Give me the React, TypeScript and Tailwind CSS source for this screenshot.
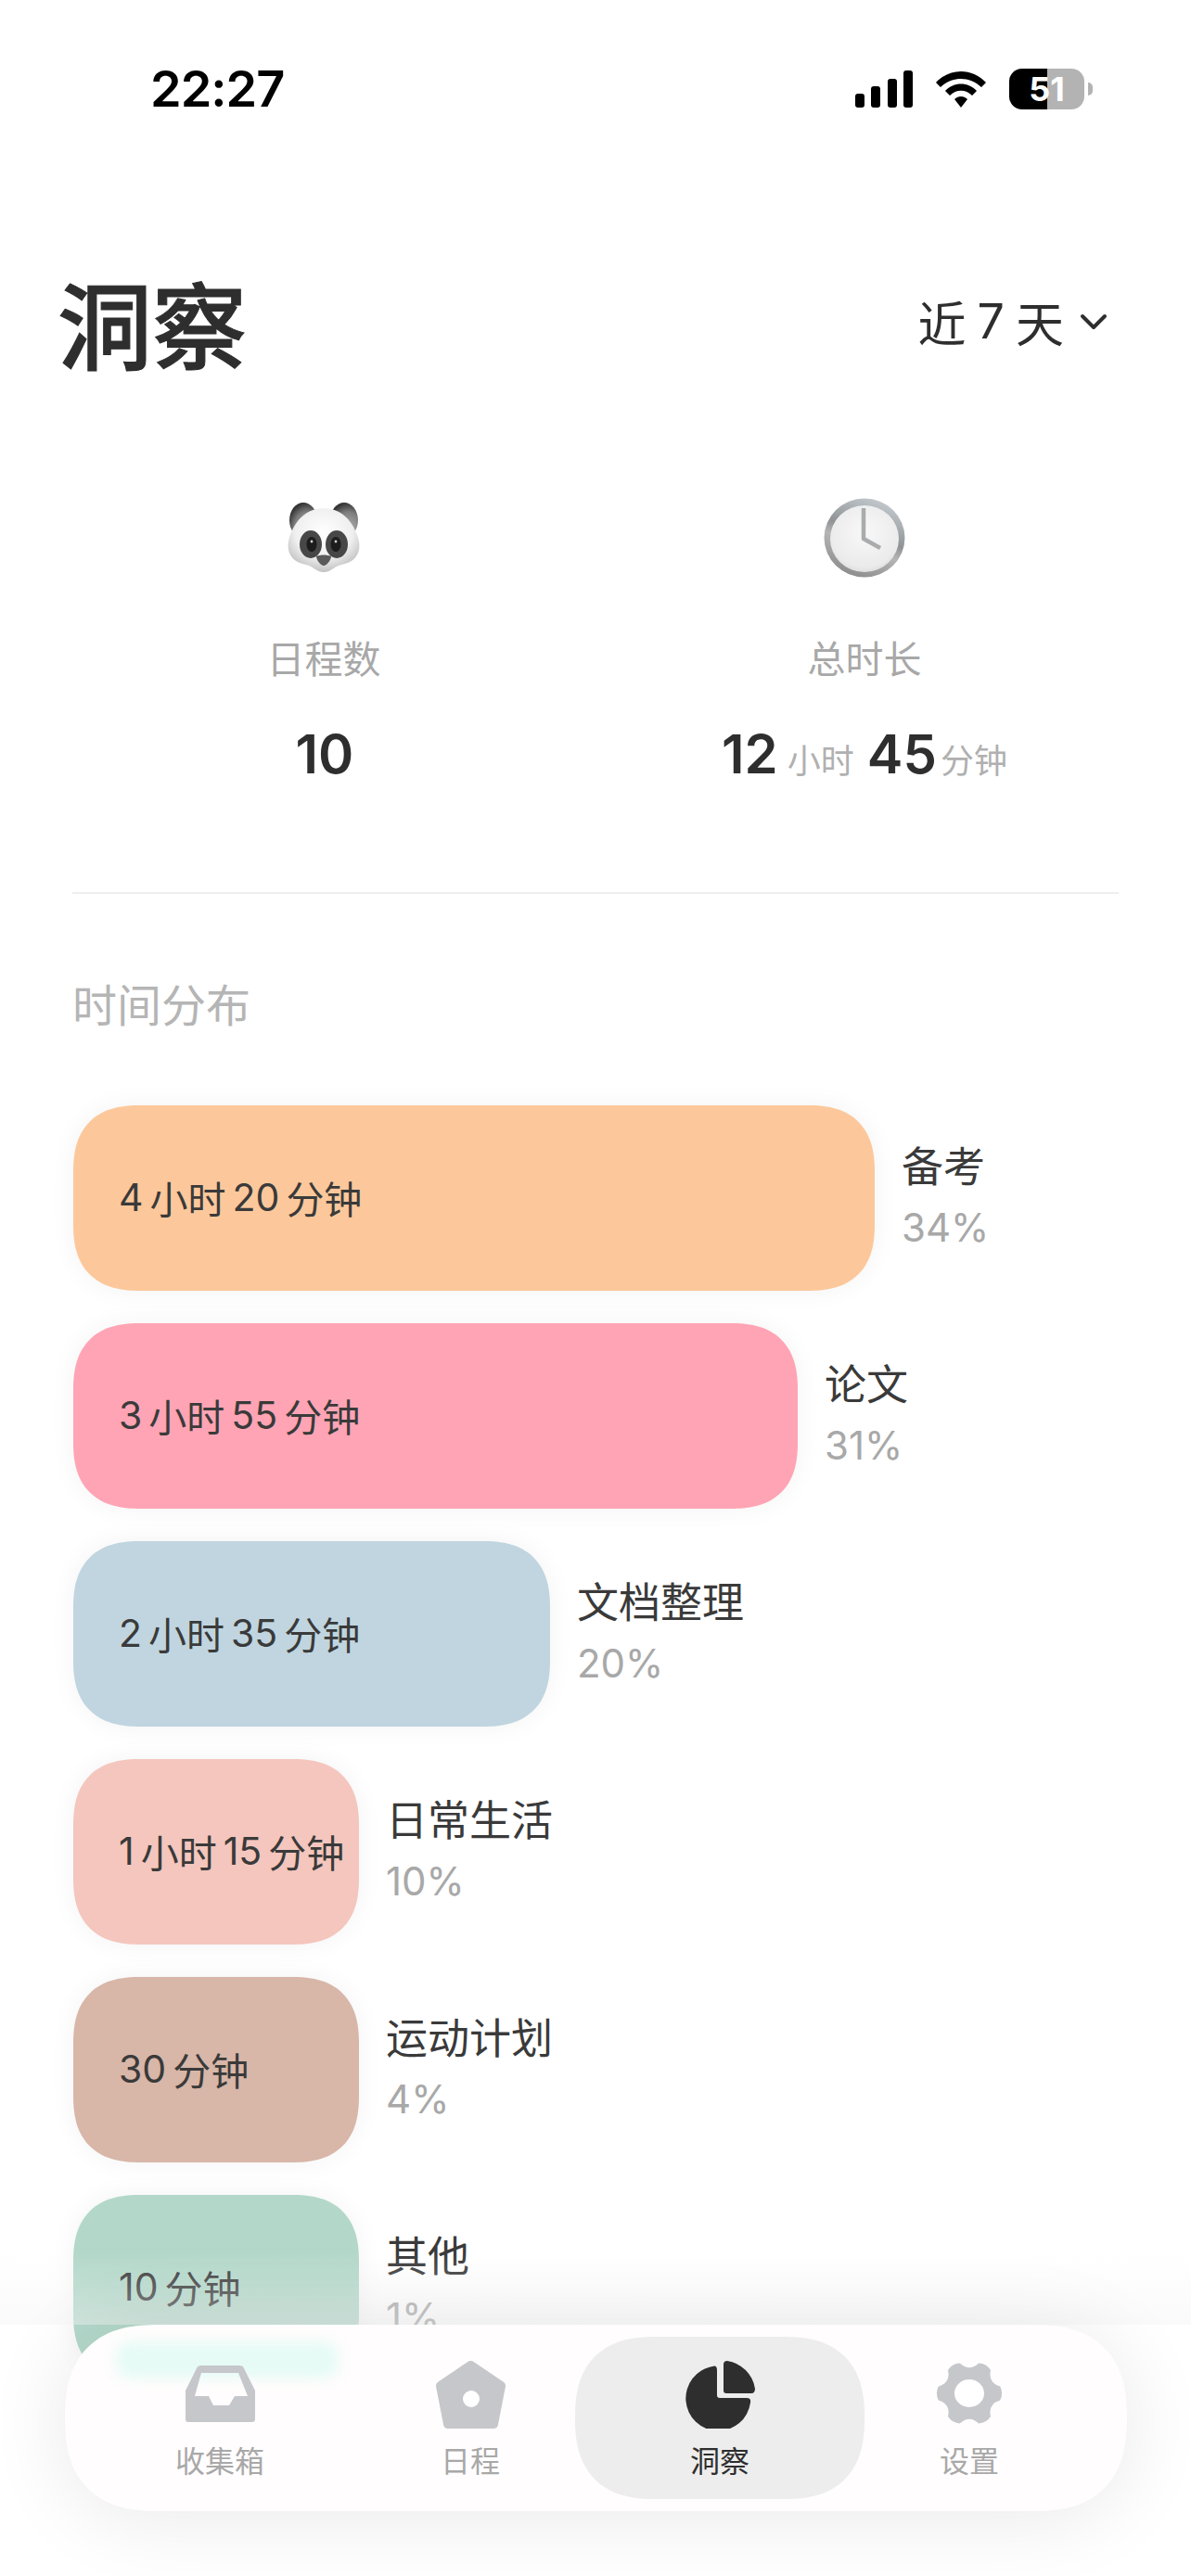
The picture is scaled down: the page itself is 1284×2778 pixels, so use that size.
import React from "react"

const bars = [
  { time: ["4", "小时", "20", "分钟"], name: "备考", pct: "34%", width: "w-[864px]", color: "bg-[#fcc89b]" },
  { time: ["3", "小时", "55", "分钟"], name: "论文", pct: "31%", width: "w-[781px]", color: "bg-[#ffa4b4]" },
  { time: ["2", "小时", "35", "分钟"], name: "文档整理", pct: "20%", width: "w-[514px]", color: "bg-[#c0d5df]" },
  { time: ["1", "小时", "15", "分钟"], name: "日常生活", pct: "10%", width: "w-[308px]", color: "bg-[#f4c6bd]" },
  { time: ["30", "分钟"], name: "运动计划", pct: "4%", width: "w-[308px]", color: "bg-[#d8b6a8]" },
  { time: ["10", "分钟"], name: "其他", pct: "1%", width: "w-[308px]", color: "bg-[#b3d8ca]" },
]

const gearPath = () => {
  const cx = 37
  const cy = 35
  let d = ""
  for (let i = 0; i < 6; i++) {
    const a = (i * Math.PI) / 3
    const p = (ang: number, r: number) =>
      `${(cx + r * Math.cos(ang)).toFixed(1)} ${(cy + r * Math.sin(ang)).toFixed(1)}`
    d += `${i === 0 ? "M" : "L"}${p(a - 0.22, 34)} Q${p(a, 37)} ${p(a + 0.22, 34)} Q${p(a + Math.PI / 6, 23)} ${p(a + Math.PI / 3 - 0.22, 34)} `
  }
  return d + "Z"
}

const StatusBar = () => (
  <div className="flex items-center justify-between pl-[162px] pr-[106px] pt-[66px]">
    <span className="font-['Inter',sans-serif] text-[54px] font-semibold leading-[60px] text-black tracking-[-1px]">22:27</span>
    <div className="flex items-center">
      <svg width="62" height="40" viewBox="0 0 62 40" className="mr-[25px]">
        <rect x="0" y="25" width="10" height="15" rx="3" fill="#000" />
        <rect x="17" y="17" width="10" height="23" rx="3" fill="#000" />
        <rect x="35" y="9" width="10" height="31" rx="3" fill="#000" />
        <rect x="52" y="0" width="10" height="40" rx="3" fill="#000" />
      </svg>
      <svg width="54" height="40" viewBox="0 0 54 40" className="mr-[25px]">
        <path d="M0 13 C15 -3 39 -3 54 13 L49 18 C36 6 18 6 5 18Z" fill="#000" />
        <path d="M10 22 C19 12 35 12 44 22 L39 27 C32 20 22 20 15 27Z" fill="#000" />
        <path d="M20 31 C24 27 30 27 34 31 L27 40Z" fill="#000" />
      </svg>
      <div className="relative flex h-[44px] w-[81px] items-center justify-center rounded-[14px] bg-[linear-gradient(90deg,#000_0,#000_41px,#b3b3b3_41px,#b3b3b3_100%)]">
        <span className="font-['Inter',sans-serif] text-[36px] font-bold leading-none text-white">51</span>
      </div>
      <div className="ml-[4px] h-[14px] w-[5px] rounded-r-full bg-[#b3b3b3]" />
    </div>
  </div>
)

const PandaEmoji = () => (
  <svg width="82" height="76" viewBox="0 0 82 76">
    <defs>
      <radialGradient id="face" cx="50%" cy="38%" r="62%">
        <stop offset="0%" stopColor="#ffffff" />
        <stop offset="65%" stopColor="#efefef" />
        <stop offset="100%" stopColor="#c2c2c2" />
      </radialGradient>
      <radialGradient id="ear" cx="65%" cy="75%" r="75%">
        <stop offset="0%" stopColor="#b5b5b5" />
        <stop offset="65%" stopColor="#7c7c7c" />
        <stop offset="100%" stopColor="#333333" />
      </radialGradient>
    </defs>
    <ellipse cx="19" cy="19" rx="15" ry="19" fill="url(#ear)" />
    <ellipse cx="63" cy="19" rx="15" ry="19" fill="url(#ear)" />
    <path d="M41 6 C60 6 72 20 77 35 C83 50 78 64 60 67 C53 68 49 75 41 75 C33 75 29 68 22 67 C4 64 -1 50 5 35 C10 20 22 6 41 6Z" fill="url(#face)" />
    <ellipse cx="27" cy="45" rx="12" ry="15" fill="#474747" />
    <ellipse cx="55" cy="45" rx="12" ry="15" fill="#474747" />
    <ellipse cx="28" cy="45" rx="5.5" ry="8" fill="#1c1c1c" />
    <ellipse cx="54" cy="45" rx="5.5" ry="8" fill="#1c1c1c" />
    <circle cx="28" cy="42" r="1.4" fill="#d0d0d0" />
    <circle cx="54" cy="42" r="1.4" fill="#d0d0d0" />
    <path d="M33 58 C37 56 45 56 49 58 C49 62 44 68 41 68 C38 68 33 62 33 58Z" fill="#5a5a5a" />
  </svg>
)

const ClockEmoji = () => (
  <svg width="88" height="86" viewBox="0 0 88 86">
    <defs>
      <linearGradient id="rim" x1="0.7" y1="0" x2="0.3" y2="1">
        <stop offset="0%" stopColor="#c5cbd0" />
        <stop offset="45%" stopColor="#8f9396" />
        <stop offset="60%" stopColor="#b5b5b5" />
        <stop offset="100%" stopColor="#8a8a8a" />
      </linearGradient>
      <radialGradient id="dial" cx="50%" cy="40%" r="65%">
        <stop offset="0%" stopColor="#f8f8f8" />
        <stop offset="80%" stopColor="#ebebeb" />
        <stop offset="100%" stopColor="#d8d8d8" />
      </radialGradient>
    </defs>
    <ellipse cx="44" cy="43" rx="43.5" ry="42.5" fill="url(#rim)" />
    <ellipse cx="44" cy="44" rx="37" ry="36" fill="url(#dial)" />
    <path d="M43 11 V44 L61 54" fill="none" stroke="#a9abad" strokeWidth="4.5" strokeLinejoin="round" />
  </svg>
)

const Stats = () => (
  <div className="flex">
    <div className="flex w-[586px] flex-col items-center pl-[112px]">
      <div className="flex h-[86px] items-center">
        <PandaEmoji />
      </div>
      <div className="mt-[61px] text-[41px] leading-[48px] text-[#a8a8a8]">日程数</div>
      <div className="mt-[46px] flex h-[70px] items-center pl-[2px] text-[58px] font-semibold text-[#2e2e2e]">
        <span className="font-['Inter',sans-serif]">10</span>
      </div>
    </div>
    <div className="flex flex-1 flex-col items-center pr-[6px]">
      <div className="flex h-[86px] items-center">
        <ClockEmoji />
      </div>
      <div className="mt-[61px] text-[41px] leading-[48px] text-[#a8a8a8]">总时长</div>
      <div className="mt-[46px] flex h-[70px] items-baseline text-[#2e2e2e]">
        <span className="font-['Inter',sans-serif] text-[58px] font-semibold leading-[70px]">12</span>
        <span className="ml-[10px] text-[36px] text-[#b0b0b0]">小时</span>
        <span className="ml-[14px] font-['Inter',sans-serif] text-[58px] font-semibold leading-[70px]">45</span>
        <span className="ml-[4px] text-[36px] text-[#b0b0b0]">分钟</span>
      </div>
    </div>
  </div>
)

const TabBar = () => (
  <div className="absolute left-[70px] top-[2507px] flex h-[201px] w-[1145px] items-center rounded-[100px] bg-[#fffdfd] pl-[32px] shadow-[0_6px_90px_rgba(0,0,0,0.09)] [corner-shape:superellipse(1.3)]">
    {/* faint tint of the bar that sits behind the glass */}
    <div className="absolute left-[55px] top-[18px] h-[40px] w-[240px] rounded-[16px] bg-[#e6fbf6] blur-[7px]" />
    <div className="relative flex w-[270px] flex-col items-center">
      <svg width="75" height="61" viewBox="0 0 75 61" className="mb-[22px] mt-[6px]">
        <path d="M17 0 H58 Q62 0 63 3 L75 27 V58 Q75 61 72 61 H3 Q0 61 0 58 V27 L12 3 Q13 0 17 0Z M17 8 L10 33 H25 L30 43 H47 L53 33 H67 L57 8Z" fill="#c6c7cb" fillRule="evenodd" />
      </svg>
      <span className="text-[32px] leading-[36px] text-[#a8a8a8]">收集箱</span>
    </div>
    <div className="relative flex w-[270px] flex-col items-center">
      <svg width="75" height="73" viewBox="0 0 75 73" className="mb-[15px]">
        <path d="M37.5 5 L70 27 L62 68 H13 L5 27Z" fill="#c6c7cb" stroke="#c6c7cb" strokeWidth="10" strokeLinejoin="round" />
        <circle cx="38" cy="41" r="9" fill="#ffffff" />
      </svg>
      <span className="text-[32px] leading-[36px] text-[#a8a8a8]">日程</span>
    </div>
    <div className="relative -mx-[22px] flex h-[175px] w-[312px] flex-col items-center justify-center rounded-[87px] bg-[#ededed] [corner-shape:superellipse(1.3)]">
      <svg width="75" height="73" viewBox="0 0 75 73" className="mb-[15px]">
        <path d="M29 6 Q34 4 34 10 V37 Q34 40 37 40 H66 Q71 40 70 45 A35 35 0 1 1 29 6Z" fill="#2e2e2e" />
        <path d="M41 4 Q41 0 45 0 A36 36 0 0 1 75 30 Q75 35 71 35 H44 Q41 35 41 32Z" fill="#2e2e2e" />
      </svg>
      <span className="text-[32px] leading-[36px] text-[#2e2e2e]">洞察</span>
    </div>
    <div className="relative flex w-[270px] flex-col items-center">
      <svg width="74" height="70" viewBox="0 0 74 70" className="mb-[18px]">
        <path d={gearPath()} fill="#c6c7cb" />
        <ellipse cx="37" cy="35" rx="16" ry="15" fill="#ffffff" />
      </svg>
      <span className="text-[32px] leading-[36px] text-[#a8a8a8]">设置</span>
    </div>
  </div>
)

export default function App() {
  return (
    <div className="relative h-[2778px] w-[1284px] overflow-hidden bg-white font-['Noto_Sans_CJK_SC','Noto_Sans',sans-serif]">
      <StatusBar />

      <div className="flex items-center justify-between pl-[62px] pr-[90px] pt-[161px]">
        <h1 className="text-[102px] font-medium leading-[120px] text-[#2e2e2e] [-webkit-text-stroke:1px_#2e2e2e]">洞察</h1>
        <div className="flex items-center gap-[17px] text-[52px] leading-[60px] text-[#2e2e2e]">
          <span className="flex items-center gap-[12px]">
            近<span className="font-['Inter',sans-serif]">7</span>天
          </span>
          <svg width="30" height="18" viewBox="0 0 30 18">
            <path d="M3 3 L15 15 L27 3" fill="none" stroke="#2e2e2e" strokeWidth="4" strokeLinecap="round" strokeLinejoin="round" />
          </svg>
        </div>
      </div>

      <div className="mt-[130px]">
        <Stats />
      </div>

      <div className="mx-[78px] mt-[114px] h-[2px] bg-[#eeeeee]" />

      <div className="pl-[78px] pt-[87px] text-[48px] leading-[60px] text-[#b5b5b5]">时间分布</div>

      <div className="mt-[81px] flex flex-col gap-[35px] pl-[79px]">
        {bars.map((bar) => (
          <div key={bar.name} className="flex items-center gap-[29px]">
            <div className={`flex h-[200px] items-center gap-[7px] rounded-[72px] pl-[49px] shadow-[0_0_28px_rgba(0,0,0,0.05)] [corner-shape:superellipse(1.3)] ${bar.width} ${bar.color}`}>
              {bar.time.map((part) => (
                <span key={part} className={/\d/.test(part) ? "font-['Inter',sans-serif] text-[41px] text-[#3a3a3a]" : "text-[41px] text-[#3a3a3a]"}>
                  {part}
                </span>
              ))}
            </div>
            <div className="flex flex-col pb-[7px]">
              <span className="text-[45px] leading-[56px] text-[#3a3a3a]">{bar.name}</span>
              <span className="mt-[15px] font-['Inter',sans-serif] text-[42px] leading-[50px] text-[#a8a8a8]">{bar.pct}</span>
            </div>
          </div>
        ))}
      </div>

      {/* haze that the glass tab bar throws over the list */}
      <div className="absolute left-0 top-[2430px] h-[77px] w-full bg-gradient-to-b from-transparent to-[#f4f4f4]/45" />

      <TabBar />
    </div>
  )
}
